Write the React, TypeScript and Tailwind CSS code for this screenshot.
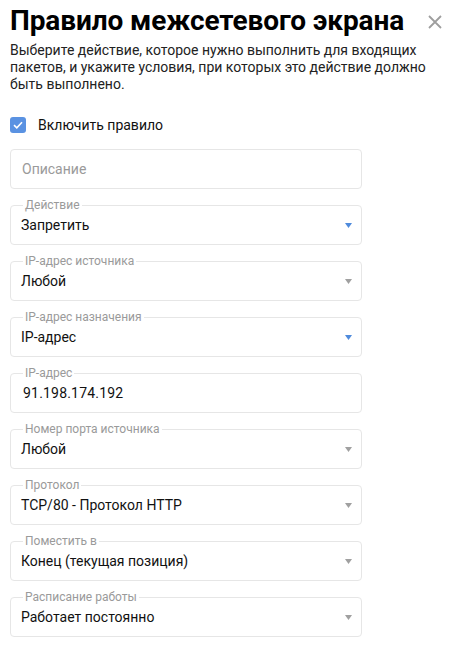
import React from "react";

type Field = { label: string; value: string; blue?: boolean; input?: boolean };

const fields: Field[] = [
  { label: "Действие", value: "Запретить", blue: true },
  { label: "IP-адрес источника", value: "Любой" },
  { label: "IP-адрес назначения", value: "IP-адрес", blue: true },
  { label: "IP-адрес", value: "91.198.174.192", input: true },
  { label: "Номер порта источника", value: "Любой" },
  { label: "Протокол", value: "TCP/80 - Протокол HTTP" },
  { label: "Поместить в", value: "Конец (текущая позиция)" },
  { label: "Расписание работы", value: "Работает постоянно" },
];

function Arrow({ blue }: { blue?: boolean }) {
  return (
    <svg width="7" height="5" viewBox="0 0 7 5" className="shrink-0">
      <path d="M0 0 H7 L3.5 5 Z" fill={blue ? "#4f8bdc" : "#a0a0a0"} />
    </svg>
  );
}

export default function App() {
  return (
    <div className="w-[451px] h-[648px] bg-white overflow-hidden pl-[10px] pt-[4px] font-['Roboto',sans-serif]">
      <div className="flex items-center w-[432px] justify-between">
        <h1 className="text-[28px] leading-[34px] font-bold text-black tracking-[-0.1px]">Правило межсетевого экрана</h1>
        <svg width="14" height="14" viewBox="0 0 14 14" className="mt-[2px]">
          <path d="M1 1 L13 13 M13 1 L1 13" stroke="#9e9e9e" strokeWidth="1.8" />
        </svg>
      </div>
      <p className="mt-[4px] text-[14px] leading-[17px] text-[#222] w-[420px]">
        Выберите действие, которое нужно выполнить для входящих пакетов, и укажите условия, при которых это действие должно быть выполнено.
      </p>
      <div className="mt-[24px] flex items-center h-[16px]">
        <div className="w-[16px] h-[16px] rounded-[3px] bg-[#5a92e2] flex items-center justify-center">
          <svg width="10" height="8" viewBox="0 0 10 8">
            <path d="M1 4.2 L3.8 6.8 L9 1.2" stroke="white" strokeWidth="1.6" fill="none" />
          </svg>
        </div>
        <span className="ml-[12px] text-[14px] text-[#111]">Включить правило</span>
      </div>
      <div className="mt-[16px] flex flex-col gap-[16px] w-[352px]">
        <div className="h-[40px] border border-[#e6e6e6] rounded-[4px] flex items-center pl-[11px]">
          <span className="text-[14px] text-[#9a9a9a]">Описание</span>
        </div>
        {fields.map((f) => (
          <div key={f.label} className="relative h-[40px] border border-[#e6e6e6] rounded-[4px] flex items-center justify-between pl-[10px] pr-[9px]">
            <span className="absolute left-[12px] top-[-8px] bg-white px-[2px] text-[12px] leading-[14px] text-[#9a9a9a]">{f.label}</span>
            <span className={`text-[14px] text-[#111] ${f.input ? "ml-[2px] tracking-[0.2px]" : ""}`}>{f.value}</span>
            {!f.input && <Arrow blue={f.blue} />}
          </div>
        ))}
      </div>
    </div>
  );
}
